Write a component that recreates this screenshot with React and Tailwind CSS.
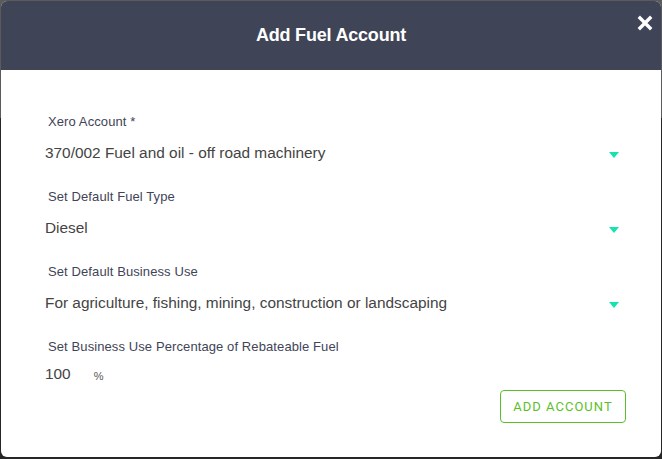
export default function App() {
    return (
        <div className="w-[662px] h-[459px] bg-[linear-gradient(to_bottom,#5b5b5b_0px,#5b5b5b_118px,#262626_118px)] p-px pb-[2px]">
            <div className="h-full bg-white rounded-[6px] overflow-hidden flex flex-col">

                {/* ─── Header ─── */}
                <div className="relative h-[69px] bg-[#3f4457] flex items-center justify-center shrink-0">
                    <h1 className="text-white font-bold text-[18px] font-[Liberation_Sans,Arial,sans-serif] tracking-[-0.2px]">
                        Add Fuel Account
                    </h1>
                    <button className="absolute right-[8px] top-[14px] text-white">
                        <svg width="16" height="16" viewBox="0 0 16 16">
                            <path d="M3 3 L13 13 M13 3 L3 13" stroke="white" strokeWidth="3.4" strokeLinecap="square" />
                        </svg>
                    </button>
                </div>

                {/* ─── Body ─── */}
                <div className="flex-1 pl-[44px] pr-[42px] pt-[44px] font-[Liberation_Sans,Arial,sans-serif]">
                    <Field label="Xero Account *" value="370/002 Fuel and oil - off road machinery" />
                    <Field label="Set Default Fuel Type" value="Diesel" />
                    <Field label="Set Default Business Use" value="For agriculture, fishing, mining, construction or landscaping" />

                    <div>
                        <div className="pl-[3px] text-[13px] leading-[16px] text-[#3f4457] tracking-[0.1px]">
                            Set Business Use Percentage of Rebateable Fuel
                        </div>
                        <div className="mt-[10px] flex items-end h-[18px]">
                            <span className="text-[15.4px] text-[#444] leading-[18px]">100</span>
                            <span className="ml-[23px] text-[11px] text-[#555] leading-[14px]">%</span>
                        </div>
                    </div>

                    <div className="flex justify-end mt-[7px] mr-[-7px]">
                        <button className="w-[126px] h-[33px] border border-[#5cbf2a] rounded-[4px] text-[#5cbf2a] text-[13px] tracking-[1px] font-[Roboto,sans-serif]">
                            ADD ACCOUNT
                        </button>
                    </div>
                </div>
            </div>
        </div>
    );
}

function Field({ label, value }) {
    return (
        <div className="h-[75px]">
            <div className="pl-[3px] text-[13px] leading-[16px] text-[#3f4457] tracking-[0.1px]">
                {label}
            </div>
            <div className="mt-[14px] flex items-center justify-between h-[18px]">
                <span className="text-[15.4px] text-[#444] leading-[18px]">{value}</span>
                <svg width="10" height="6" viewBox="0 0 10 6" className="mt-[3px]">
                    <path d="M0 0 H10 L5 6 Z" fill="#14e3b0" />
                </svg>
            </div>
        </div>
    );
}
